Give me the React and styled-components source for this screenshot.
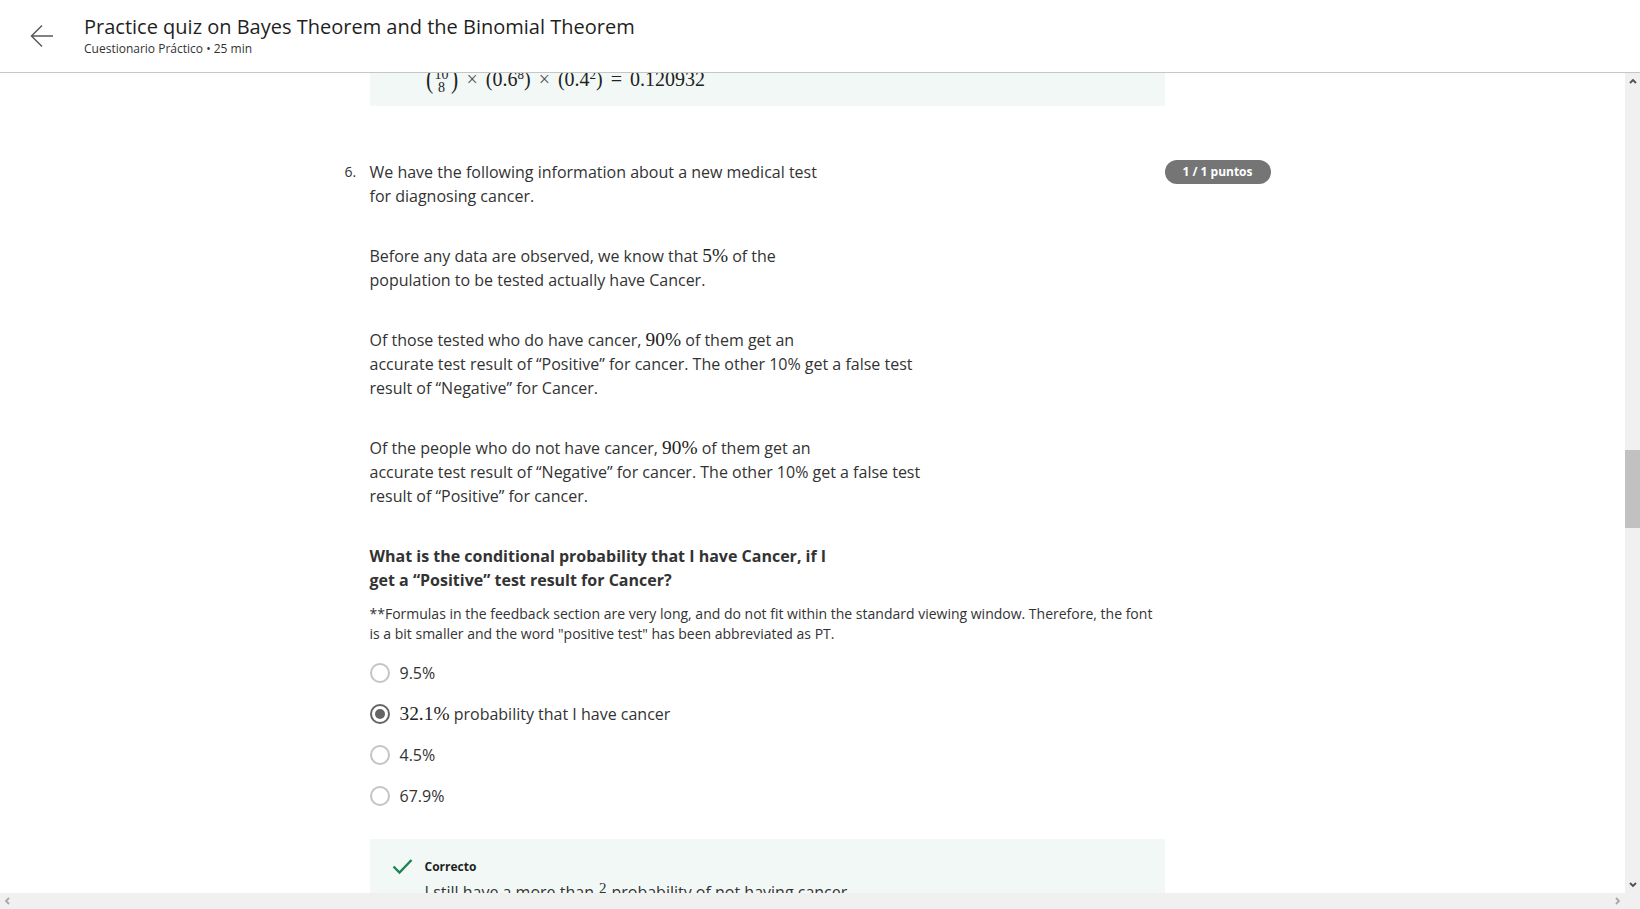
import React from "react";
import styled, { createGlobalStyle } from "styled-components";

const GlobalStyle = createGlobalStyle`
  html, body {
    margin: 0;
    padding: 0;
    overflow: hidden;
    background: #ffffff;
  }
  body {
    font-family: "Open Sans", "Noto Sans", sans-serif;
    color: #333333;
  }
  * { box-sizing: border-box; }
`;

const Page = styled.div`
  width: 1640px;
  height: 909px;
  display: flex;
  flex-direction: column;
`;

const Header = styled.header`
  height: 73px;
  flex: none;
  display: flex;
  align-items: center;
  padding-left: 30px;
  gap: 30px;
  border-bottom: 1px solid #c6c6c6;
  padding-bottom: 1px;
`;

const BackButton = styled.button`
  width: 24px;
  height: 24px;
  padding: 0;
  border: none;
  background: none;
  display: flex;
  align-items: center;
  justify-content: center;
  cursor: pointer;
  color: #5a5a5a;
`;

const HeaderText = styled.div`
  display: flex;
  flex-direction: column;
  margin-top: -1px;
`;

const Title = styled.h1`
  margin: 0;
  font-size: 20px;
  font-weight: 400;
  line-height: 28px;
  color: #1f1f1f;
`;

const Subtitle = styled.div`
  font-size: 12px;
  line-height: 16px;
  color: #333;
`;

const Body = styled.div`
  flex: 1;
  min-height: 0;
  display: flex;
`;

const Viewport = styled.main`
  flex: 1;
  overflow: hidden;
`;

const Content = styled.div`
  width: 936px;
  margin: -25px auto 0;
`;

const QuestionItem = styled.section`
  display: grid;
  grid-template-columns: 25px 795px 106px;
  align-items: start;
  margin-top: ${(p) => p.$top || 0}px;
`;

const Number = styled.div`
  font-size: 14px;
  line-height: 24px;
`;

const QuestionBody = styled.div`
  display: flex;
  flex-direction: column;
`;

const Para = styled.p`
  margin: 0 0 ${(p) => (p.$last ? 0 : 36)}px;
  font-size: 16px;
  line-height: 24px;
  color: #333;
  font-weight: ${(p) => (p.$bold ? 700 : 400)};
`;

const Note = styled.p`
  margin: 12px 0 0;
  font-size: 14px;
  line-height: 20px;
  color: #333;
`;

const Math = styled.span`
  font-family: "Liberation Serif", "DejaVu Serif", serif;
  font-size: 1.21em;
  line-height: 1;
  color: #222;
`;

const Badge = styled.div`
  justify-self: start;
  height: 24px;
  padding: 0 18px;
  border-radius: 12px;
  background: #757575;
  color: #fff;
  font-size: 12px;
  font-weight: 700;
  line-height: 24px;
  white-space: nowrap;
`;

const Options = styled.div`
  display: flex;
  flex-direction: column;
  gap: 17px;
  margin-top: 17px;
`;

const OptionRow = styled.label`
  display: flex;
  align-items: center;
  gap: 10px;
  height: 24px;
  font-size: 16px;
  color: #333;
  cursor: pointer;
`;

const Radio = styled.span`
  width: 20px;
  height: 20px;
  flex: none;
  border-radius: 50%;
  border: 2px solid ${(p) => (p.$checked ? "#646464" : "#c4c4c4")};
  display: flex;
  align-items: center;
  justify-content: center;
  &::after {
    content: "";
    width: 10px;
    height: 10px;
    border-radius: 50%;
    background: ${(p) => (p.$checked ? "#646464" : "transparent")};
  }
`;

const Feedback = styled.div`
  background: #f2f8f5;
  padding: ${(p) => (p.$compact ? "19px 22px 15px" : "18px 22px 16px")};
  margin-top: ${(p) => p.$top || 0}px;
`;

const FeedbackHead = styled.div`
  display: flex;
  align-items: center;
  gap: 12px;
  height: 18px;
`;

const FeedbackLabel = styled.span`
  font-size: 12px;
  font-weight: 700;
  color: #1f1f1f;
`;

const FeedbackText = styled.div`
  padding-left: 33px;
  margin-top: ${(p) => p.$top || 0}px;
  font-size: 16px;
  line-height: 24px;
  color: #333;
  white-space: nowrap;
`;

const Formula = styled.div`
  padding-left: 33px;
  height: 24px;
  display: flex;
  align-items: center;
  font-family: "Liberation Serif", "DejaVu Serif", serif;
  font-size: 20px;
  color: #222;
  gap: 8px;
  sup { font-size: 13px; vertical-align: 7px; line-height: 0; }
`;

const Op = styled.span`
  color: #555;
`;

const Paren = styled.span`
  font-size: 27px;
  line-height: 1;
  transform: scaleX(0.8);
`;

const BinomGroup = styled.span`
  display: inline-flex;
  align-items: center;
`;

const Binom = styled.span`
  display: inline-flex;
  flex-direction: column;
  align-items: center;
  font-size: 14px;
  line-height: 13px;
  margin: 3px 1px 0;
`;

const Frac = styled.span`
  display: inline-flex;
  flex-direction: column;
  align-items: center;
  vertical-align: 5px;
  font-family: "Liberation Serif", serif;
  font-size: 15px;
  line-height: 12px;
  margin: 0 5px;
  span + span { border-top: 1px solid #333; }
`;

const VScroll = styled.div`
  width: 15px;
  flex: none;
  background: #f0f0f0;
  display: flex;
  flex-direction: column;
  align-items: center;
`;

const ScrollArrow = styled.div`
  width: 15px;
  height: 17px;
  flex: none;
  display: flex;
  align-items: center;
  justify-content: center;
  color: ${(p) => (p.$disabled ? "#a8a8a8" : "#505050")};
`;

const Track = styled.div`
  flex: 1;
  width: 15px;
`;

const Thumb = styled.div`
  width: 15px;
  height: 78px;
  margin-top: 360px;
  background: #c1c1c1;
`;

const HScroll = styled.div`
  height: 16px;
  flex: none;
  background: #f0f0f0;
  display: flex;
  align-items: center;
  justify-content: space-between;
  padding-right: 15px;
`;

const Chevron = ({ dir }) => {
  const paths = {
    up: "M1 5 L4 2 L7 5",
    down: "M1 2 L4 5 L7 2",
    left: "M5 1 L2 4 L5 7",
    right: "M2 1 L5 4 L2 7",
  };
  return (
    <svg width="8" height="8" viewBox="0 0 8 8">
      <path d={paths[dir]} fill="none" stroke="currentColor" strokeWidth="1.8" />
    </svg>
  );
};

const BackArrow = () => (
  <svg width="24" height="24" viewBox="0 0 24 24">
    <path d="M23 12H1.5M12 1.5L1.5 12L12 22.5" fill="none" stroke="currentColor" strokeWidth="1.5" />
  </svg>
);

const CheckIcon = () => (
  <svg width="21" height="17" viewBox="0 0 21 17">
    <path d="M1.5 8.5 L7.5 14.5 L19.5 2" fill="none" stroke="#1f8354" strokeWidth="2.4" />
  </svg>
);

const options = [
  { id: "a", label: "9.5%" },
  { id: "b", math: "32.1%", label: " probability that I have cancer", checked: true },
  { id: "c", label: "4.5%" },
  { id: "d", label: "67.9%" },
];

export default function App() {
  return (
    <Page>
      <GlobalStyle />
      <Header>
        <BackButton aria-label="Back">
          <BackArrow />
        </BackButton>
        <HeaderText>
          <Title>Practice quiz on Bayes Theorem and the Binomial Theorem</Title>
          <Subtitle>Cuestionario Práctico • 25 min</Subtitle>
        </HeaderText>
      </Header>

      <Body>
        <Viewport>
          <Content>
            <QuestionItem>
              <div />
              <Feedback $compact>
                <Formula>
                  <BinomGroup>
                    <Paren>(</Paren>
                    <Binom>
                      <span>10</span>
                      <span>8</span>
                    </Binom>
                    <Paren>)</Paren>
                  </BinomGroup>
                  <Op>×</Op>
                  <span>(0.6<sup>8</sup>)</span>
                  <Op>×</Op>
                  <span>(0.4<sup>2</sup>)</span>
                  <span>=</span>
                  <span>0.120932</span>
                </Formula>
              </Feedback>
            </QuestionItem>

            <QuestionItem $top={54}>
              <Number>6.</Number>
              <QuestionBody>
                <Para>
                  We have the following information about a new medical test
                  <br />
                  for diagnosing cancer.
                </Para>
                <Para>
                  Before any data are observed, we know that <Math>5%</Math> of the
                  <br />
                  population to be tested actually have Cancer.
                </Para>
                <Para>
                  Of those tested who do have cancer, <Math>90%</Math> of them get an
                  <br />
                  accurate test result of “Positive” for cancer. The other 10% get a false test
                  <br />
                  result of “Negative” for Cancer.
                </Para>
                <Para>
                  Of the people who do not have cancer, <Math>90%</Math> of them get an
                  <br />
                  accurate test result of “Negative” for cancer. The other 10% get a false test
                  <br />
                  result of “Positive” for cancer.
                </Para>
                <Para $bold $last>
                  What is the conditional probability that I have Cancer, if I
                  <br />
                  get a “Positive” test result for Cancer?
                </Para>
                <Note>
                  **Formulas in the feedback section are very long, and do not fit within the standard viewing window. Therefore, the font
                  <br />
                  is a bit smaller and the word "positive test" has been abbreviated as PT.
                </Note>

                <Options>
                  {options.map((o) => (
                    <OptionRow key={o.id}>
                      <Radio $checked={o.checked} />
                      <span>
                        {o.math && <Math>{o.math}</Math>}
                        {o.label}
                      </span>
                    </OptionRow>
                  ))}
                </Options>

                <Feedback $top={31}>
                  <FeedbackHead>
                    <CheckIcon />
                    <FeedbackLabel>Correcto</FeedbackLabel>
                  </FeedbackHead>
                  <FeedbackText $top={5}>
                    I still have a more than
                    <Frac>
                      <span>2</span>
                      <span>3</span>
                    </Frac>
                    probability of not having cancer.
                  </FeedbackText>
                </Feedback>
              </QuestionBody>
              <Badge>1 / 1 puntos</Badge>
            </QuestionItem>
          </Content>
        </Viewport>

        <VScroll>
          <ScrollArrow>
            <Chevron dir="up" />
          </ScrollArrow>
          <Track>
            <Thumb />
          </Track>
          <ScrollArrow>
            <Chevron dir="down" />
          </ScrollArrow>
        </VScroll>
      </Body>

      <HScroll>
        <ScrollArrow $disabled>
          <Chevron dir="left" />
        </ScrollArrow>
        <ScrollArrow $disabled>
          <Chevron dir="right" />
        </ScrollArrow>
      </HScroll>
    </Page>
  );
}
